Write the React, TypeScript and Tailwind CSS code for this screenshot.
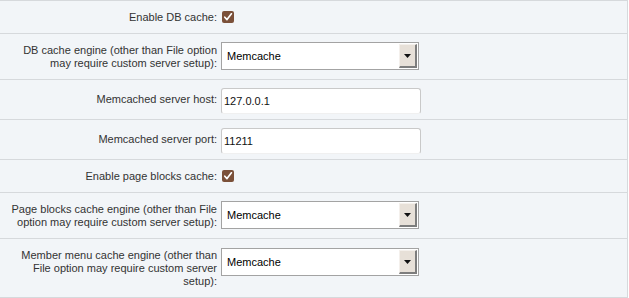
import type { ReactNode } from "react";

const font = "font-['Liberation_Sans',Arial,sans-serif]";

function Checkbox() {
  return (
    <span className="ml-[1px] flex h-[12px] w-[12px] items-center justify-center rounded-[2px] bg-[#7b5039]">
      <svg width="10" height="10" viewBox="0 0 10 10">
        <path d="M1.8 5.2 L4 7.6 L8.4 1.8" fill="none" stroke="#fff" strokeWidth="1.7" strokeLinecap="round" strokeLinejoin="round" />
      </svg>
    </span>
  );
}

function Select({ value }: { value: string }) {
  return (
    <div className="flex h-[28px] w-[198px] items-stretch border border-[#a3a3a3] bg-white p-[1px]">
      <span className="flex flex-1 items-center pl-[4px] text-[11px] text-black">{value}</span>
      <span className="flex w-[18px] items-center justify-center border-t border-l border-r-2 border-b-2 border-t-[#f4f0ec] border-l-[#f4f0ec] border-r-[#7d7d7d] border-b-[#7d7d7d] bg-[#e7e0d8]">
        <svg width="7" height="4" viewBox="0 0 7 4">
          <path d="M0 0 H7 L3.5 4 Z" fill="#111" />
        </svg>
      </span>
    </div>
  );
}

function TextInput({ value }: { value: string }) {
  return (
    <div className="flex h-[26px] w-[200px] items-center rounded-[3px] border border-[#c9c9c9] border-b-[#f0f0f0] bg-white pl-[2px] text-[11px] text-[#111]">
      {value}
    </div>
  );
}

function Row({ label, height, top, children }: { label: string; height: string; top: string; children: ReactNode }) {
  return (
    <div className={`flex border-b border-[#d6d9dc] ${height}`}>
      <div className="flex w-[217px] shrink-0 items-center justify-end pl-[7px] text-right text-[11px] leading-[13px] text-[#333]">
        <span>{label}</span>
      </div>
      <div className={`pl-1 ${top}`}>{children}</div>
    </div>
  );
}

export default function App() {
  return (
    <div className={`${font} h-[298px] w-[629px] bg-white`}>
      <div className="w-[628px] border-t border-r border-[#d6d9dc] bg-[#f2f5f8]">
        <Row label="Enable DB cache:" height="h-[33px]" top="flex items-center">
          <Checkbox />
        </Row>
        <Row label="DB cache engine (other than File option may require custom server setup):" height="h-[46px]" top="pt-2">
          <Select value="Memcache" />
        </Row>
        <Row label="Memcached server host:" height="h-[40px]" top="pt-2">
          <TextInput value="127.0.0.1" />
        </Row>
        <Row label="Memcached server port:" height="h-[40px]" top="pt-2">
          <TextInput value="11211" />
        </Row>
        <Row label="Enable page blocks cache:" height="h-[33px]" top="flex items-center">
          <Checkbox />
        </Row>
        <Row label="Page blocks cache engine (other than File option may require custom server setup):" height="h-[46px]" top="pt-2">
          <Select value="Memcache" />
        </Row>
        <Row label="Member menu cache engine (other than File option may require custom server setup):" height="h-[59px]" top="pt-[9px]">
          <Select value="Memcache" />
        </Row>
      </div>
    </div>
  );
}
